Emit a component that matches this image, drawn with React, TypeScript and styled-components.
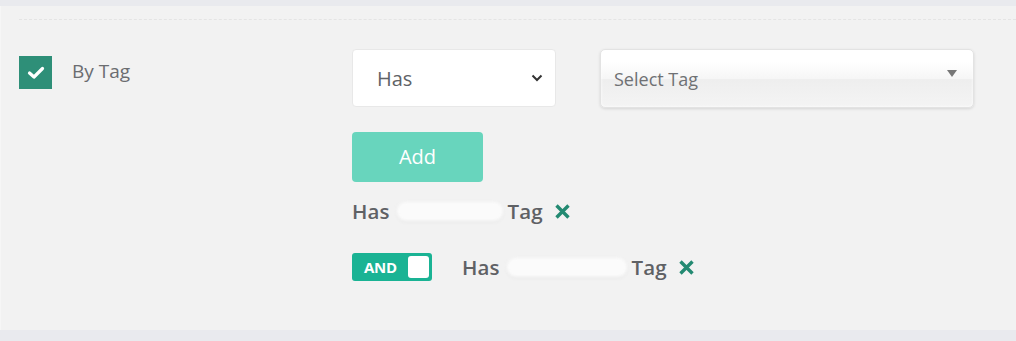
import styled, { createGlobalStyle } from "styled-components";

const GlobalStyle = createGlobalStyle`
  html, body {
    margin: 0;
    padding: 0;
    background: #e9eaee;
    font-family: "Open Sans", "Liberation Sans", sans-serif;
  }
`;

const Page = styled.div`
  width: 1016px;
  height: 341px;
  padding-top: 6px;
  box-sizing: border-box;
`;

const Panel = styled.div`
  height: 324px;
  background: #f2f2f2;
  padding: 13px 0 0 18px;
  box-sizing: border-box;
  border-left: 1px solid #f6f6f6;
`;

const Divider = styled.div`
  border-top: 1px dashed #e4e4e4;
`;

const FilterRow = styled.div`
  display: flex;
  margin-top: 29px;
`;

const LabelCol = styled.label`
  width: 333px;
  display: flex;
  align-items: flex-start;
  gap: 20px;
  padding-top: 7px;
`;

const Checkbox = styled.span`
  width: 33px;
  height: 33px;
  background: #2e8f78;
  display: flex;
  align-items: center;
  justify-content: center;
`;

const LabelText = styled.span`
  font-size: 19px;
  color: #6b6d70;
  line-height: 30px;
`;

const Controls = styled.div`
  display: flex;
  flex-direction: column;
  align-items: flex-start;
`;

const SelectRow = styled.div`
  display: flex;
  gap: 44px;
`;

const NativeSelect = styled.div`
  width: 204px;
  height: 58px;
  background: #fff;
  border-radius: 4px;
  border: 1px solid #e8e8e8;
  box-sizing: border-box;
  display: flex;
  align-items: center;
  justify-content: space-between;
  padding: 0 12px 0 24px;
  font-size: 20px;
  color: #606266;
`;

const ChosenSelect = styled.div`
  width: 374px;
  height: 59px;
  border-radius: 5px;
  border: 1px solid #e3e3e3;
  box-sizing: border-box;
  background: linear-gradient(#ffffff 20%, #f6f6f6 50%, #eeeeee 52%, #f4f4f4 100%);
  box-shadow: 0 1px 3px rgba(0, 0, 0, 0.12), inset 0 0 3px #fff;
  display: flex;
  align-items: center;
  justify-content: space-between;
  padding: 0 16px 0 13px;
  font-size: 18px;
  color: #6f7174;
`;

const Arrow = styled.span`
  width: 0;
  height: 0;
  border-left: 5px solid transparent;
  border-right: 5px solid transparent;
  border-top: 7px solid #777;
  margin-top: -10px;
`;

const AddButton = styled.button`
  margin-top: 24px;
  width: 131px;
  height: 50px;
  border: none;
  border-radius: 4px;
  background: #68d5bd;
  color: #fff;
  font-family: inherit;
  font-size: 20px;
  padding: 0 0 2px;
`;

const TagRow = styled.div<{ $top: number }>`
  display: flex;
  align-items: center;
  margin-top: ${(p) => p.$top}px;
  font-size: 20.5px;
  font-weight: 600;
  color: #5f6165;
  height: 30px;
  letter-spacing: 0.1px;
`;

const Blur = styled.span<{ $w: number }>`
  display: inline-block;
  width: ${(p) => p.$w}px;
  height: 19px;
  margin: 0 5px 0 7px;
  background: #fbfbfb;
  border-radius: 9px;
  box-shadow: 0 1px 2px rgba(0, 0, 0, 0.08);
  filter: blur(1.5px);
`;

const Remove = styled.span`
  margin-left: 11px;
  display: flex;
`;

const Toggle = styled.span`
  width: 80px;
  height: 28px;
  background: #1ab394;
  border-radius: 3px;
  display: flex;
  align-items: center;
  justify-content: space-between;
  padding: 0 3px 0 12px;
  box-sizing: border-box;
  margin-right: 30px;
`;

const ToggleText = styled.span`
  color: #fff;
  font-size: 15px;
  font-weight: 700;
  letter-spacing: -0.3px;
`;

const Knob = styled.span`
  width: 21px;
  height: 22px;
  background: #fff;
  border-radius: 3px;
`;

const Cross = () => (
  <svg width="17" height="17" viewBox="0 0 17 17">
    <path d="M2.5 2.5 L14.5 14.5 M14.5 2.5 L2.5 14.5" stroke="#238a72" strokeWidth="3.4" strokeLinecap="butt" />
  </svg>
);

export default function App() {
  return (
    <Page>
      <GlobalStyle />
      <Panel>
        <Divider />
        <FilterRow>
          <LabelCol>
            <Checkbox>
              <svg width="18" height="14" viewBox="0 0 18 14">
                <path d="M2.5 7 L7 11 L15.5 2.5" stroke="#fff" strokeWidth="3.2" fill="none" strokeLinecap="round" strokeLinejoin="round" />
              </svg>
            </Checkbox>
            <LabelText>By Tag</LabelText>
          </LabelCol>
          <Controls>
            <SelectRow>
              <NativeSelect>
                Has
                <svg width="12" height="8" viewBox="0 0 12 8">
                  <path d="M1.5 1.5 L6 6 L10.5 1.5" stroke="#333" strokeWidth="2" fill="none" />
                </svg>
              </NativeSelect>
              <ChosenSelect>
                Select Tag
                <Arrow />
              </ChosenSelect>
            </SelectRow>
            <AddButton>Add</AddButton>
            <TagRow $top={14}>
              Has<Blur $w={106} />Tag
              <Remove>
                <Cross />
              </Remove>
            </TagRow>
            <TagRow $top={26}>
              <Toggle>
                <ToggleText>AND</ToggleText>
                <Knob />
              </Toggle>
              Has<Blur $w={120} />Tag
              <Remove>
                <Cross />
              </Remove>
            </TagRow>
          </Controls>
        </FilterRow>
      </Panel>
    </Page>
  );
}
